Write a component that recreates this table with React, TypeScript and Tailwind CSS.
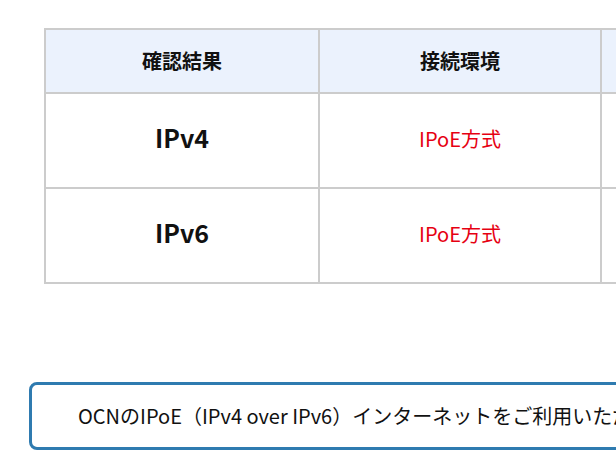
const rows = [
  { result: "IPv4", env: "IPoE方式" },
  { result: "IPv6", env: "IPoE方式" },
]

export default function App() {
  return (
    <div
      className="h-[476px] w-[616px] overflow-hidden bg-white text-[#111]"
      style={{ fontFamily: '"Noto Sans CJK JP", "Noto Sans", sans-serif' }}
    >
      <div className="pt-[28px] pl-[44px]">
        <div className="grid w-[840px] grid-cols-[274px_282px_284px] border-l-2 border-t-2 border-[#cccccc]">
          <div className="flex h-[64px] items-center justify-center border-b-2 border-r-2 border-[#cccccc] bg-[#ebf2fd] text-[20px] font-bold">
            確認結果
          </div>
          <div className="flex h-[64px] items-center justify-center border-b-2 border-r-2 border-[#cccccc] bg-[#ebf2fd] text-[20px] font-bold">
            接続環境
          </div>
          <div className="h-[64px] border-b-2 border-r-2 border-[#cccccc] bg-[#ebf2fd]" />
          {rows.map((row) => (
            <>
              <div
                key={row.result + "a"}
                className="flex h-[95px] items-center justify-center border-b-2 border-r-2 border-[#cccccc] pb-[5px] text-[25px] font-bold"
              >
                {row.result}
              </div>
              <div
                key={row.result + "b"}
                className="flex h-[95px] items-center justify-center border-b-2 border-r-2 border-[#cccccc] pb-[4px] text-[20px] text-[#e60012]"
              >
                {row.env}
              </div>
              <div key={row.result + "c"} className="h-[95px] border-b-2 border-r-2 border-[#cccccc]" />
            </>
          ))}
        </div>
      </div>

      <div className="mt-[98px] ml-[29px] w-[700px] rounded-[8px] border-[3px] border-[#2f7bb0] py-[18px] pl-[46px]">
        <p className="whitespace-nowrap text-[20px] leading-[26px]">
          OCNのIPoE（IPv4 over IPv6）インターネットをご利用いただけます。
        </p>
      </div>
    </div>
  )
}
